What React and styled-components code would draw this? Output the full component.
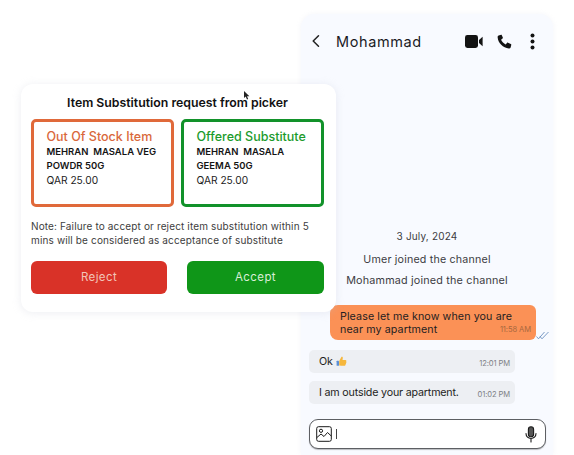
import React from "react";
import styled, { createGlobalStyle } from "styled-components";

const Global = createGlobalStyle`
  html, body { margin: 0; padding: 0; background: #fff; }
  * { box-sizing: border-box; }
`;

const Stage = styled.div`
  position: relative;
  width: 574px;
  height: 455px;
  overflow: hidden;
  background: #fff;
  font-family: Inter, "Open Sans", sans-serif;
  color: #151515;
`;

const ChatPanel = styled.section`
  margin: 14px 0 0 301px;
  width: 252px;
  height: 441px;
  padding-bottom: 6px;
  border-radius: 14px 14px 0 0;
  background: #f8faff;
  box-shadow: 0 0 5px rgba(215, 220, 235, 0.3);
  display: flex;
  flex-direction: column;
`;

const ChatHeader = styled.header`
  display: flex;
  align-items: center;
  height: 54px;
  padding: 0 18px 0 8px;
`;

const Name = styled.h1`
  margin: 0 0 0 13px;
  flex: 1;
  font-size: 14.5px;
  font-weight: 400;
  letter-spacing: 0.6px;
  color: #1b1b1f;
`;

const HeaderIcons = styled.div`
  display: flex;
  align-items: center;
`;

const HeaderIcon = styled.span`
  display: flex;
  margin-left: ${(p) => p.$gap}px;
`;

const Messages = styled.div`
  flex: 1;
  display: flex;
  flex-direction: column;
  justify-content: flex-end;
`;

const Notice = styled.p`
  margin: 0 0 ${(p) => p.$gap}px;
  text-align: center;
  font-size: ${(p) => p.$size}px;
  line-height: 14px;
  letter-spacing: 0.18px;
  color: #3c3c42;
`;

const Bubble = styled.div`
  position: relative;
  width: 206px;
  margin-left: ${(p) => (p.$mine ? 29 : 8)}px;
  height: ${(p) => (p.$mine ? 35 : 23)}px;
  margin-bottom: ${(p) => (p.$mine ? 10 : 8)}px;
  padding: 5px 10px;
  border-radius: ${(p) => (p.$mine ? "8px 6px 6px 8px" : "5px")};
  background: ${(p) => (p.$mine ? "#fb9156" : "#edeff3")};
  font-size: 10.7px;
  line-height: 13px;
  letter-spacing: ${(p) => (p.$mine ? "0.1px" : "-0.18px")};
  color: #1e1e22;
  display: ${(p) => (p.$mine ? "block" : "flex")};
  align-items: center;
  gap: 3px;
`;

const Time = styled.span`
  position: absolute;
  right: 5px;
  bottom: ${(p) => (p.$mine ? 6 : 5)}px;
  font-size: 7.6px;
  line-height: 9px;
  letter-spacing: -0.1px;
  color: ${(p) => (p.$mine ? "#a9683f" : "#7d7f85")};
`;

const Ticks = styled.svg`
  position: absolute;
  right: -13px;
  bottom: 0;
`;

const Composer = styled.div`
  margin: 7px 7px 0 8px;
  height: 30px;
  padding: 0 7px 0 6px;
  border: 1px solid #5d5f63;
  border-radius: 9px;
  background: #fff;
  box-shadow: 0 1px 1px rgba(0, 0, 0, 0.25);
  display: flex;
  align-items: center;
  gap: 4px;
`;

const Caret = styled.span`
  width: 1px;
  height: 10px;
  background: #444;
  margin-right: auto;
`;

const Card = styled.section`
  position: absolute;
  left: 21px;
  top: 84px;
  width: 315px;
  height: 228px;
  padding: 0 12px 0 10px;
  border-radius: 12px;
  background: #fff;
  box-shadow: 0 1px 8px rgba(190, 195, 210, 0.28);
`;

const Title = styled.h2`
  margin: 0;
  padding-top: 11px;
  height: 35px;
  text-align: center;
  font-size: 12.3px;
  line-height: 16px;
  font-weight: 600;
  color: #111;
`;

const Boxes = styled.div`
  display: grid;
  grid-template-columns: 143px 143px;
  gap: 7px;
`;

const Box = styled.div`
  height: 88px;
  padding: 7px 0 0 12.5px;
  border: 3px solid ${(p) => p.$color};
  border-radius: 5px;
`;

const BoxTitle = styled.div`
  font-size: 12.5px;
  line-height: 16px;
  font-weight: 500;
  color: ${(p) => p.$color};
`;

const ItemName = styled.div`
  font-size: 9.5px;
  line-height: 14px;
  font-weight: 600;
  white-space: pre;
  color: #141414;
`;

const Price = styled.div`
  font-size: 10.2px;
  line-height: 14px;
  color: #222;
`;

const Note = styled.p`
  margin: 13px 0 14px;
  font-size: 10px;
  line-height: 13.5px;
  letter-spacing: 0.14px;
  color: #3d3d3d;
  white-space: nowrap;
`;

const Actions = styled.div`
  display: flex;
  justify-content: space-between;
`;

const Action = styled.button`
  width: ${(p) => p.$w}px;
  height: 33px;
  border: 0;
  border-radius: 6px;
  background: ${(p) => p.$bg};
  color: ${(p) => p.$fg};
  font: 400 11.5px/33px Inter, "Open Sans", sans-serif;
  letter-spacing: 0.4px;
  padding: 0;
`;

const Pointer = styled.svg`
  position: absolute;
  left: 244px;
  top: 91px;
`;

const Back = () => (
  <svg width="14" height="14" viewBox="0 0 14 14" fill="none" stroke="#222" strokeWidth="1.5" strokeLinecap="round" strokeLinejoin="round">
    <path d="M9.5 1.8 4.2 7l5.3 5.2" />
  </svg>
);

const Video = () => (
  <svg width="18" height="13" viewBox="0 0 18 13" fill="#131313">
    <rect x="0" y="0" width="13" height="13" rx="2.4" />
    <path d="M14 5 17.6 1.8V11.2L14 8Z" />
  </svg>
);

const Phone = () => (
  <svg width="15" height="15" viewBox="0 0 24 24" fill="#131313">
    <path d="M6.6 1.2 2.6 2.2C1.4 2.6.9 3.6 1 5c.8 9.300 8.700 17.200 18 18 1.400.1 2.400-.4 2.800-1.600l1-4c.2-.7-.1-1.300-.7-1.600l-4.600-2c-.6-.3-1.200-.1-1.600.4l-2 2.400c-3.200-1.600-5.800-4.200-7.400-7.400l2.400-2c.5-.4.700-1 .4-1.600l-2-4.600C8 1.300 7.300 1 6.600 1.200Z" />
  </svg>
);

const Dots = () => (
  <svg width="5" height="17" viewBox="0 0 5 17" fill="#131313">
    <circle cx="2.5" cy="2.500" r="2" />
    <circle cx="2.500" cy="8.500" r="2" />
    <circle cx="2.500" cy="14.500" r="2" />
  </svg>
);

const Thumb = () => (
  <svg width="11" height="11" viewBox="0 0 11 11">
    <path d="M3.200 5 5.500.8c.9-.3 1.500.3 1.300 1.300L6.500 4h3c.8 0 1.100 1 .7 1.500.4.500.3 1.300-.2 1.600.2.600 0 1.200-.5 1.400.1.800-.4 1.300-1.100 1.300H5.200L3.200 9.500Z" fill="#f6b73c" />
    <rect x=".6" y="4.800" width="2.400" height="5" rx=".4" fill="#5b8fd6" />
  </svg>
);

const ImageIcon = () => (
  <svg width="16" height="16" viewBox="0 0 16 16" fill="none" stroke="#1a1a1a" strokeWidth="1">
    <rect x=".7" y=".7" width="14.600" height="14.600" rx="1.800" />
    <circle cx="5" cy="4.800" r="1.600" />
    <path d="M.9 11.500 5 8l3 2.500 3.500-4 3.800 3.500" />
  </svg>
);

const Mic = () => (
  <svg width="14" height="17" viewBox="0 0 14 17" fill="none" stroke="#1a1a1a" strokeWidth="1.100" strokeLinecap="round">
    <rect x="4.400" y=".8" width="5.200" height="10" rx="2.600" fill="#555" />
    <path d="M2 7.500c0 3.200 2.200 5 5 5s5-1.800 5-5M7 12.500v3.500" />
  </svg>
);

export default function App() {
  return (
    <Stage>
      <Global />
      <ChatPanel>
        <ChatHeader>
          <Back />
          <Name>Mohammad</Name>
          <HeaderIcons>
            <HeaderIcon $gap={0}><Video /></HeaderIcon>
            <HeaderIcon $gap={14}><Phone /></HeaderIcon>
            <HeaderIcon $gap={18}><Dots /></HeaderIcon>
          </HeaderIcons>
        </ChatHeader>
        <Messages>
          <Notice $gap={10} $size={10}>3 July, 2024</Notice>
          <Notice $gap={7} $size={10.7}>Umer joined the channel</Notice>
          <Notice $gap={17} $size={10.8}>Mohammad joined the channel</Notice>
          <Bubble $mine>
            Please let me know when you are
            <br />
            near my apartment
            <Time $mine>11:58 AM</Time>
            <Ticks width="13" height="9" viewBox="0 0 13 9" fill="none" stroke="#5a83b8" strokeWidth=".8">
              <path d="M.5 5.500 2.500 7.800 8.500 1M4 5.500l2 2.300L12.500 1" />
            </Ticks>
          </Bubble>
          <Bubble>
            Ok <Thumb />
            <Time>12:01 PM</Time>
          </Bubble>
          <Bubble>
            I am outside your apartment.
            <Time>01:02 PM</Time>
          </Bubble>
          <Composer>
            <ImageIcon />
            <Caret />
            <Mic />
          </Composer>
        </Messages>
      </ChatPanel>

      <Card>
        <Title>Item Substitution request from picker</Title>
        <Boxes>
          <Box $color="#e0693a">
            <BoxTitle $color="#d9683c">Out Of Stock Item</BoxTitle>
            <ItemName>{"MEHRAN  MASALA VEG\nPOWDR 50G"}</ItemName>
            <Price>QAR 25.00</Price>
          </Box>
          <Box $color="#12922a">
            <BoxTitle $color="#1c9b2c">Offered Substitute</BoxTitle>
            <ItemName>{"MEHRAN  MASALA\nGEEMA 50G"}</ItemName>
            <Price>QAR 25.00</Price>
          </Box>
        </Boxes>
        <Note>
          Note: Failure to accept or reject item substitution within 5
          <br />
          mins will be considered as acceptance of substitute
        </Note>
        <Actions>
          <Action $w={136} $bg="#d93228" $fg="#f2c4b8">Reject</Action>
          <Action $w={137} $bg="#0f9618" $fg="#d9eed6">Accept</Action>
        </Actions>
      </Card>

      <Pointer width="6" height="9" viewBox="0 0 6 9" fill="#222">
        <path d="M0 0v7l1.700-1.500L3 8.500l1.200-.5L3 5.200h2.400Z" />
      </Pointer>
    </Stage>
  );
}
